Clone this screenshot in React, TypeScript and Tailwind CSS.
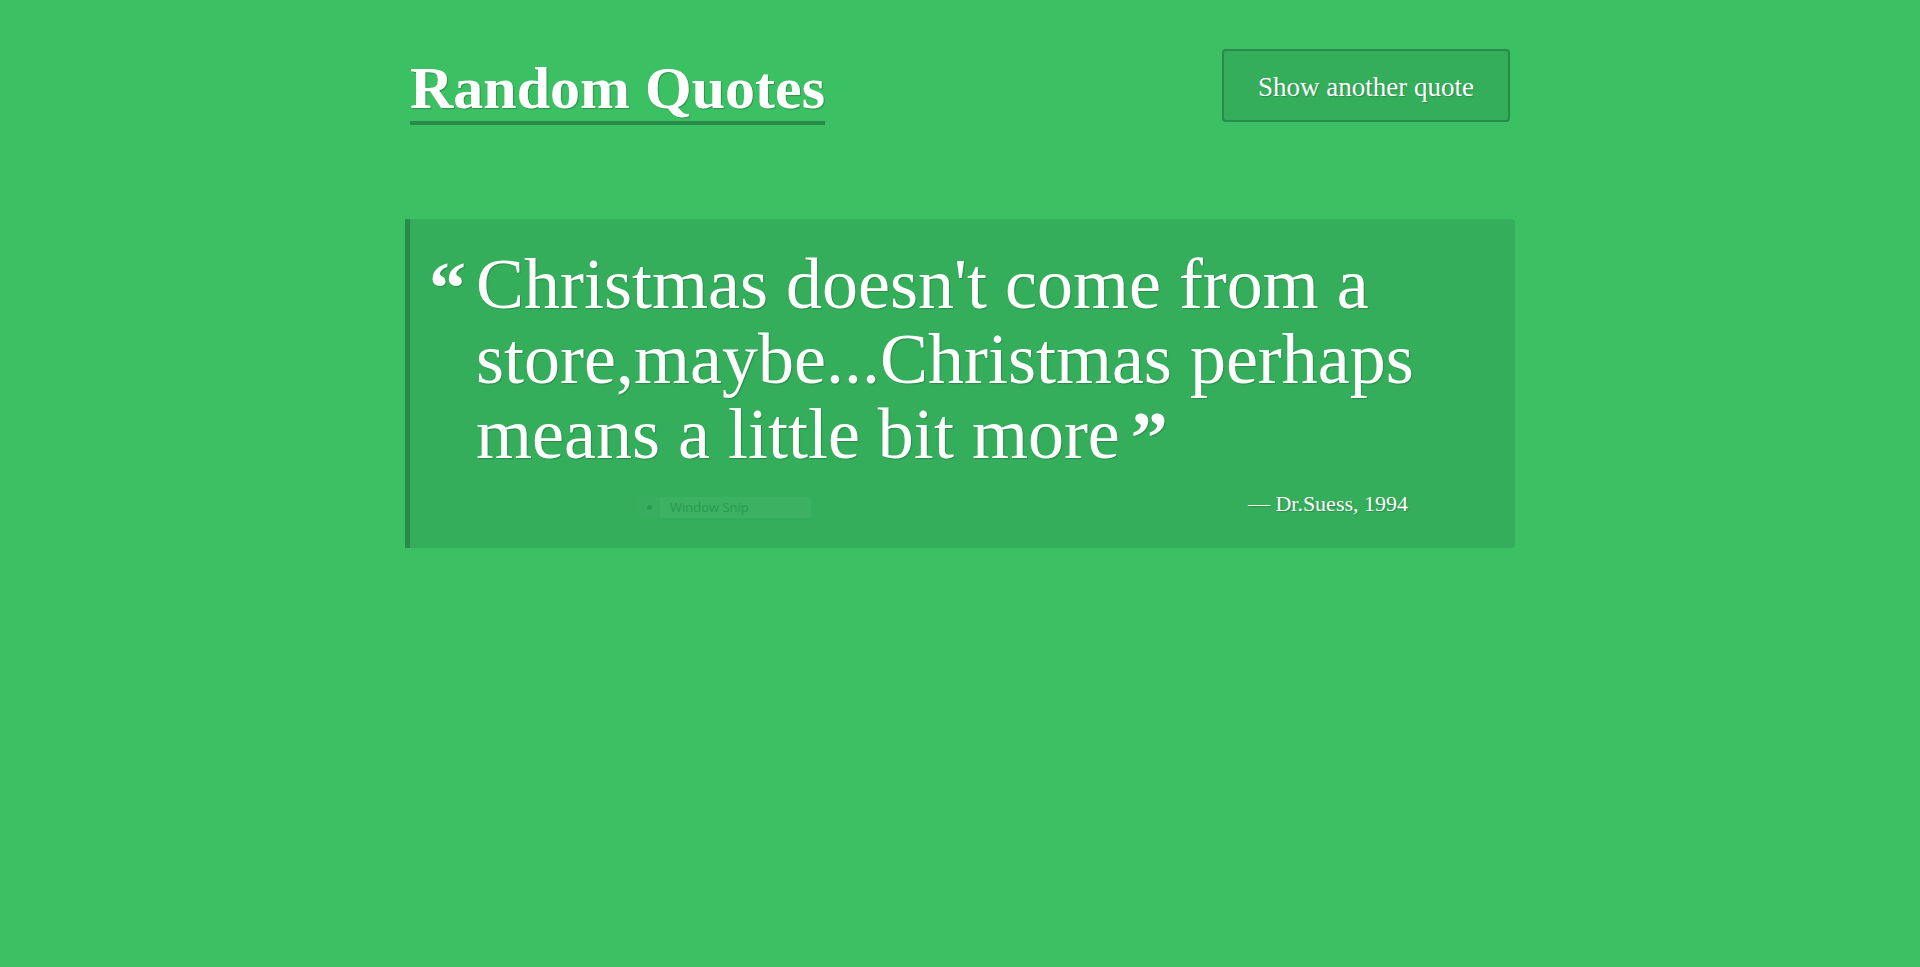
import React from 'react';

const serif = { fontFamily: '"Liberation Serif", "DejaVu Serif", serif' };

const QuoteCard: React.FC = () => {
  return (
    <div className="relative flex rounded-r-[4px] border-l-[5px] border-[#2b8a48] bg-[#34ae5b] pt-[28px] pb-[28px] pl-[21px] pr-[40px]">
      {/* opening mark */}
      <span className="w-[45px] shrink-0 text-[74px] font-bold leading-[75px] text-white [text-shadow:1px_1px_1px_rgba(0,0,0,0.2)]">
        <span className="relative top-[4px] -left-[2px] block">“</span>
      </span>
      <div className="flex-1">
        <p className="whitespace-nowrap text-[72px] leading-[75px] text-white [text-shadow:1px_1px_1px_rgba(0,0,0,0.2)]">
          Christmas doesn't come from a
          <br />
          store,maybe...Christmas perhaps
          <br />
          means a little bit more
          <span className="ml-[11px] inline-block align-top text-[74px] font-bold leading-[75px]">
            <span className="relative top-[4px]">”</span>
          </span>
        </p>
        <p className="mt-[15px] pr-[67px] text-right text-[22px] leading-[33px] text-white [text-shadow:1px_1px_1px_rgba(0,0,0,0.2)]">
          — Dr.Suess, 1994
        </p>
      </div>

      {/* faint snipping-tool label caught in the capture */}
      <div className="absolute left-[228px] top-[278px] flex h-[21px] w-[173px] items-center bg-white/[0.04]">
        <div className="flex h-full w-[22px] items-center justify-center bg-black/[0.02]">
          <span className="h-[5px] w-[5px] rounded-full bg-[#2b9a4f]" />
        </div>
        <span
          className="ml-[10px] text-[13px] text-[#2b9a4f]"
          style={{ fontFamily: '"Open Sans", "Noto Sans", sans-serif' }}
        >
          Window Snip
        </span>
      </div>
    </div>
  );
};

export default function App() {
  return (
    <div className="min-h-[967px] w-full bg-[#3bc163]" style={serif}>
      <div className="mx-auto w-[1110px] pt-[49px]">
        <header className="flex items-start justify-between px-[5px]">
          <h1 className="mt-[6px] inline-block border-b-4 border-[#2b8a48] text-[60px] font-bold leading-[66px] text-white [text-shadow:1px_1px_1px_rgba(0,0,0,0.25)]">
            Random Quotes
          </h1>
          <button className="h-[73px] w-[288px] rounded-[4px] border-2 border-[#2b8a48] bg-[#34ae5b] pt-[4px] text-[27px] text-white [text-shadow:1px_1px_1px_rgba(0,0,0,0.2)]">
            Show another quote
          </button>
        </header>

        <main className="mt-[94px]">
          <QuoteCard />
        </main>
      </div>
    </div>
  );
}
